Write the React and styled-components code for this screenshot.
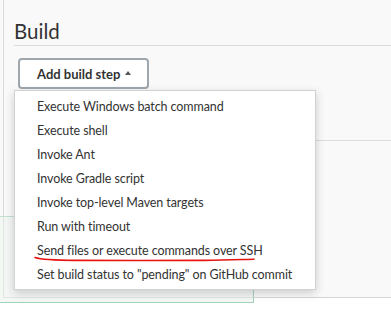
import React from "react";
import styled, { createGlobalStyle } from "styled-components";

const Global = createGlobalStyle`
  html, body { margin: 0; padding: 0; background: #ffffff; }
  body { font-family: Lato, "Open Sans", sans-serif; color: #333; }
`;

const Page = styled.div`
  position: relative;
  width: 391px;
  height: 325px;
  overflow: hidden;
  background: #ffffff;
`;

const Section = styled.div`
  height: 297px;
  background: #f9f9f9;
  border-bottom: 1px solid #d6d6d6;
  display: flex;
  flex-direction: column;
`;

const Panel = styled.div`
  flex-shrink: 0;
  margin-left: 3px;
  border-left: 1px solid #dadada;
  height: 216px;
  padding-left: 10px;
  display: flex;
  flex-direction: column;
`;

const Title = styled.h2`
  margin: 0;
  padding-top: 18px;
  height: 26px;
  font-size: 20.5px;
  font-weight: 400;
  line-height: 26px;
  color: #333;
`;

const Divider = styled.div`
  height: 1px;
  background: #dcdcdc;
  margin-top: 1px;
`;

const ButtonWrap = styled.div`
  position: relative;
  margin-top: 12px;
  margin-left: 4px;
  align-self: flex-start;
`;

const AddButton = styled.button`
  display: flex;
  align-items: center;
  gap: 5px;
  height: 31px;
  width: 131px;
  padding: 0 0 0 17px;
  box-sizing: border-box;
  background: #ffffff;
  border: 2px solid #9ea6ae;
  border-radius: 4px;
  font-family: Lato, "Open Sans", sans-serif;
  font-size: 13px;
  font-weight: 700;
  color: #333;
`;

const Caret = styled.span`
  width: 0;
  height: 0;
  border-left: 3.5px solid transparent;
  border-right: 3.5px solid transparent;
  border-bottom: 4px solid #555;
  margin-top: -1px;
`;

const LowerDivider = styled.div`
  height: 1px;
  background: #dcdcdc;
  margin-top: 51px;
`;

const Menu = styled.ul`
  position: absolute;
  left: -4px;
  top: 32px;
  width: 300px;
  margin: 0;
  padding: 4px 0 2px;
  list-style: none;
  background: #ffffff;
  border: 1px solid #d2d2d2;
  box-shadow: 0 3px 9px rgba(0, 0, 0, 0.18);
  z-index: 5;
`;

const Item = styled.li`
  height: 24px;
  line-height: 24px;
  padding-left: 22px;
  font-size: 12.5px;
  letter-spacing: -0.1px;
  color: #333;
  white-space: nowrap;
  position: relative;
`;

const Underline = styled.svg`
  position: absolute;
  left: 20px;
  top: 18px;
  overflow: visible;
`;

const DropZone = styled.div`
  flex-shrink: 0;
  width: 253px;
  height: 85px;
  background: #f3f8f4;
  border-top: 1px solid #c3e1cf;
  border-right: 1px solid #a3d4ba;
  border-bottom: 1px solid #a3d4ba;
  position: relative;
  z-index: 1;
  display: flex;
`;

const DropInner = styled.div`
  margin-left: 3px;
  width: 250px;
  height: 80px;
  border-left: 1px solid #dce6df;
  border-bottom: 1px solid #e0e7e2;
  background: #f3f6f4;
`;

const items = [
  "Execute Windows batch command",
  "Execute shell",
  "Invoke Ant",
  "Invoke Gradle script",
  "Invoke top-level Maven targets",
  "Run with timeout",
  "Send files or execute commands over SSH",
  'Set build status to "pending" on GitHub commit',
];

export default function App() {
  return (
    <>
      <Global />
      <Page>
        <Section>
          <Panel>
            <Title>Build</Title>
            <Divider />
            <ButtonWrap>
              <AddButton>
                Add build step <Caret />
              </AddButton>
              <Menu>
                {items.map((t, i) => (
                  <Item key={t}>
                    {t}
                    {i === 6 && (
                      <Underline width="220" height="6" viewBox="0 0 220 6">
                        <path
                          d="M0 0.5 C 6 2.5, 14 3.2, 40 3.4 S 150 3.6, 170 3.4 S 210 2.4, 219 2.2"
                          fill="none"
                          stroke="#e8140f"
                          strokeWidth="1.6"
                          strokeLinecap="round"
                        />
                      </Underline>
                    )}
                  </Item>
                ))}
              </Menu>
            </ButtonWrap>
            <LowerDivider />
          </Panel>
          <DropZone>
            <DropInner />
          </DropZone>
        </Section>
      </Page>
    </>
  );
}
